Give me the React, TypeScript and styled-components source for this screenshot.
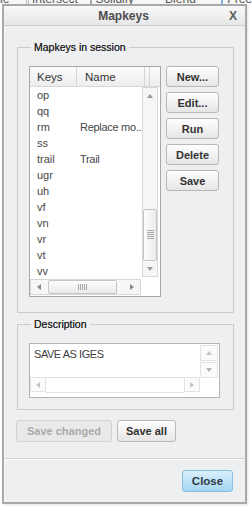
import styled, { createGlobalStyle, css } from 'styled-components'

const GlobalStyle = createGlobalStyle`
  html, body {
    margin: 0;
    padding: 0;
    background: #fff;
  }
  body {
    font-family: 'Liberation Sans', Arial, sans-serif;
    overflow: hidden;
  }
`

const mapkeys = [
  { key: 'op', name: '' },
  { key: 'qq', name: '' },
  { key: 'rm', name: 'Replace mo...' },
  { key: 'ss', name: '' },
  { key: 'trail', name: 'Trail' },
  { key: 'ugr', name: '' },
  { key: 'uh', name: '' },
  { key: 'vf', name: '' },
  { key: 'vn', name: '' },
  { key: 'vr', name: '' },
  { key: 'vt', name: '' },
  { key: 'vv', name: '' },
]

const sideButtons = ['New...', 'Edit...', 'Run', 'Delete', 'Save']

type Dir = 'up' | 'down' | 'left' | 'right'

const Arrow = ({ dir, color }: { dir: Dir; color: string }) => (
  <StyledArrow $dir={dir} $color={color} />
)

export default function App() {
  return (
    <StyledScreen>
      <GlobalStyle />

      <StyledToolbarStrip>
        <StyledToolbarRow>
          <StyledToolLabel $ml={-4}>ne</StyledToolLabel>
          <StyledToolIcon $ml={17} $color="#b9b9b9" />
          <StyledToolLabel $ml={3}>Intersect</StyledToolLabel>
          <StyledToolIcon $ml={12} $color="#a9a9a9" />
          <StyledToolLabel $ml={3}>Solidify</StyledToolLabel>
          <StyledToolLabel $ml={31}>Blend</StyledToolLabel>
          <StyledToolIcon $ml={25} $color="#7fb2de" />
          <StyledToolLabel $ml={4}>Free</StyledToolLabel>
        </StyledToolbarRow>
      </StyledToolbarStrip>

      <StyledDialog>
        <StyledTitleBar>
          <span />
          <StyledTitle>Mapkeys</StyledTitle>
          <StyledCloseX>X</StyledCloseX>
        </StyledTitleBar>

        <StyledBody>
          <StyledGroup $pr={13} $pb={15}>
            <StyledLegend>Mapkeys in session</StyledLegend>
            <StyledSessionRow>
              <StyledListBox>
                <StyledListHeader>
                  <StyledHeaderCell $w={47} $pl={7}>Keys</StyledHeaderCell>
                  <StyledHeaderCell $w={68} $pl={8}>Name</StyledHeaderCell>
                  <StyledHeaderCell $w={5} $pl={0} />
                </StyledListHeader>

                <StyledListBody>
                  <StyledRows>
                    {mapkeys.map((m) => (
                      <StyledRow key={m.key}>
                        <StyledKeyCell>{m.key}</StyledKeyCell>
                        <StyledNameCell>{m.name}</StyledNameCell>
                      </StyledRow>
                    ))}
                  </StyledRows>

                  <StyledVScroll>
                    <StyledScrollButton $size={15}>
                      <Arrow dir="up" color="#9a9a9a" />
                    </StyledScrollButton>
                    <StyledVTrack>
                      <StyledVThumb>
                        <StyledGrip $vertical />
                      </StyledVThumb>
                    </StyledVTrack>
                    <StyledScrollButton $size={14}>
                      <Arrow dir="down" color="#9a9a9a" />
                    </StyledScrollButton>
                  </StyledVScroll>

                  <StyledHScroll $w={111}>
                    <StyledScrollButton $size={16}>
                      <Arrow dir="left" color="#8a8a8a" />
                    </StyledScrollButton>
                    <StyledHTrack>
                      <StyledHThumb>
                        <StyledGrip />
                      </StyledHThumb>
                    </StyledHTrack>
                    <StyledScrollButton $size={16}>
                      <Arrow dir="right" color="#8a8a8a" />
                    </StyledScrollButton>
                  </StyledHScroll>
                </StyledListBody>
              </StyledListBox>

              <StyledButtonColumn>
                {sideButtons.map((b) => (
                  <StyledButton key={b} $w={53} $h={21}>
                    {b}
                  </StyledButton>
                ))}
              </StyledButtonColumn>
            </StyledSessionRow>
          </StyledGroup>

          <StyledGroup $pr={12} $pb={11} $mt={5}>
            <StyledLegend>Description</StyledLegend>
            <StyledDescBox>
              <StyledDescText>SAVE AS IGES</StyledDescText>
              <StyledDescVScroll>
                <StyledDescButton>
                  <Arrow dir="up" color="#c4c4c4" />
                </StyledDescButton>
                <StyledDescButton>
                  <Arrow dir="down" color="#b4b4b4" />
                </StyledDescButton>
              </StyledDescVScroll>
              <StyledDescHScroll>
                <StyledDescButton>
                  <Arrow dir="left" color="#c4c4c4" />
                </StyledDescButton>
                <StyledDescTrack />
                <StyledDescButton>
                  <Arrow dir="right" color="#c4c4c4" />
                </StyledDescButton>
              </StyledDescHScroll>
            </StyledDescBox>
          </StyledGroup>

          <StyledSaveRow>
            <StyledButton $w={96} $h={22} disabled>
              Save changed
            </StyledButton>
            <StyledButton $w={59} $h={22}>
              Save all
            </StyledButton>
          </StyledSaveRow>
        </StyledBody>

        <StyledFooter>
          <StyledButton $w={51} $h={22} $primary>
            Close
          </StyledButton>
        </StyledFooter>
      </StyledDialog>
    </StyledScreen>
  )
}

const StyledScreen = styled.div`
  position: relative;
  width: 252px;
  height: 510px;
  overflow: hidden;
  background: #fff;
`

const StyledToolbarStrip = styled.div`
  height: 4px;
  overflow: hidden;
  background: #f7f7f7;
`

const StyledToolbarRow = styled.div`
  display: flex;
  align-items: center;
  margin-top: -8px;
  height: 14px;
  font-size: 12px;
  line-height: 14px;
  color: #555;
  white-space: nowrap;
`

const StyledToolLabel = styled.span<{ $ml: number }>`
  margin-left: ${({ $ml }) => $ml}px;
`

const StyledToolIcon = styled.span<{ $ml: number; $color: string }>`
  display: block;
  width: 7px;
  height: 12px;
  margin-left: ${({ $ml }) => $ml}px;
  border: 1px solid ${({ $color }) => $color};
  background: #fafafa;
`

const StyledDialog = styled.div`
  position: absolute;
  left: 2px;
  top: 4px;
  width: 245px;
  box-sizing: border-box;
  border: 2px solid #a9a9a9;
  background: #eeeff1;
  box-shadow: inset 1px 1px 0 #fbfbfb, 1px 1px 2px rgba(0, 0, 0, 0.12);
`

const StyledTitleBar = styled.div`
  display: grid;
  grid-template-columns: 1fr auto 1fr;
  align-items: center;
  height: 19px;
  border-bottom: 1px solid #cdcdcd;
  background: linear-gradient(#f7f7f7, #e7e7e8);
`

const StyledTitle = styled.span`
  font-size: 12px;
  font-weight: bold;
  color: #4d4d4d;
  padding-right: 2px;
`

const StyledCloseX = styled.span`
  justify-self: end;
  padding-right: 8px;
  font-size: 12px;
  font-weight: bold;
  color: #5a5a5a;
`

const StyledBody = styled.div`
  padding: 15px 11px 0 13px;
`

const StyledGroup = styled.fieldset<{ $pr: number; $pb: number; $mt?: number }>`
  margin: ${({ $mt }) => $mt ?? 0}px 0 0 0;
  min-width: 0;
  border: 1px solid #cbcbcb;
  padding: 12px ${({ $pr }) => $pr}px ${({ $pb }) => $pb}px 11px;
`

const StyledLegend = styled.legend`
  margin-left: 2px;
  padding: 0 3px;
  font-size: 10.5px;
  line-height: 13px;
  color: #1f1f1f;
  text-shadow: 0 0 0.4px #555;
`

const StyledSessionRow = styled.div`
  display: flex;
  align-items: flex-start;
  gap: 5px;
`

const StyledListBox = styled.div`
  width: 132px;
  height: 231px;
  box-sizing: border-box;
  border: 1px solid #a7a7a7;
  background: #fff;
  display: flex;
  flex-direction: column;
`

const StyledListHeader = styled.div`
  display: flex;
  height: 20px;
  box-sizing: border-box;
  border-bottom: 1px solid #d9d9d9;
  background: linear-gradient(#fbfbfb, #ededed);
`

const StyledHeaderCell = styled.div<{ $w: number; $pl: number }>`
  width: ${({ $w }) => $w}px;
  flex: none;
  box-sizing: border-box;
  padding-left: ${({ $pl }) => $pl}px;
  border-right: 1px solid #d6d6d6;
  font-size: 11.5px;
  line-height: 20px;
  color: #333;
`

const StyledListBody = styled.div`
  display: grid;
  grid-template-columns: 112px 16px;
  grid-template-rows: 192px 17px;
`

const StyledRows = styled.div`
  display: flex;
  flex-direction: column;
  overflow: hidden;
`

const StyledRow = styled.div`
  display: flex;
  align-items: center;
  height: 16px;
  flex: none;
  font-size: 11px;
  color: #474747;
`

const StyledKeyCell = styled.span`
  flex: none;
  width: 50px;
  box-sizing: border-box;
  padding-left: 7px;
`

const StyledNameCell = styled.span`
  white-space: nowrap;
  letter-spacing: -0.3px;
`

const scrollFrame = css`
  box-sizing: border-box;
  border: 1px solid #d8d8d8;
  background: #f6f6f6;
`

const StyledVScroll = styled.div`
  ${scrollFrame};
  display: flex;
  flex-direction: column;
  height: 190px;
`

const StyledScrollButton = styled.div<{ $size: number }>`
  display: flex;
  align-items: center;
  justify-content: center;
  flex: 0 0 ${({ $size }) => $size}px;
`

const StyledVTrack = styled.div`
  flex: 1;
  display: flex;
  flex-direction: column;
  justify-content: flex-end;
  padding-bottom: 1px;
`

const StyledVThumb = styled.div`
  height: 52px;
  box-sizing: border-box;
  border: 1px solid #c6c6c6;
  border-radius: 2px;
  background: linear-gradient(to right, #fdfdfd, #ebebeb);
  display: flex;
  align-items: center;
  justify-content: center;
`

const StyledHScroll = styled.div<{ $w: number }>`
  ${scrollFrame};
  grid-column: 1;
  display: flex;
  width: ${({ $w }) => $w}px;
  height: 16px;
`

const StyledHTrack = styled.div`
  flex: 1;
  display: flex;
  padding-left: 1px;
`

const StyledHThumb = styled.div`
  width: 69px;
  box-sizing: border-box;
  border: 1px solid #c6c6c6;
  border-radius: 2px;
  background: linear-gradient(#fdfdfd, #ebebeb);
  display: flex;
  align-items: center;
  justify-content: center;
`

const StyledGrip = styled.div<{ $vertical?: boolean }>`
  width: ${({ $vertical }) => ($vertical ? '7px' : '10px')};
  height: ${({ $vertical }) => ($vertical ? '10px' : '6px')};
  background: repeating-linear-gradient(
    ${({ $vertical }) => ($vertical ? 'to bottom' : 'to right')},
    #a9a9a9 0 1px,
    transparent 1px 2px
  );
`

const StyledArrow = styled.span<{ $dir: Dir; $color: string }>`
  width: 0;
  height: 0;
  border: 3px solid transparent;
  ${({ $dir, $color }) => {
    switch ($dir) {
      case 'up':
        return css`
          border-bottom: 4px solid ${$color};
          border-top-width: 0;
        `
      case 'down':
        return css`
          border-top: 4px solid ${$color};
          border-bottom-width: 0;
        `
      case 'left':
        return css`
          border-right: 4px solid ${$color};
          border-left-width: 0;
        `
      default:
        return css`
          border-left: 4px solid ${$color};
          border-right-width: 0;
        `
    }
  }}
`

const StyledButtonColumn = styled.div`
  display: flex;
  flex-direction: column;
  gap: 5px;
`

const StyledButton = styled.button<{ $w: number; $h: number; $primary?: boolean }>`
  width: ${({ $w }) => $w}px;
  height: ${({ $h }) => $h}px;
  box-sizing: border-box;
  padding: 0;
  border: 1px solid #b8b8b8;
  border-radius: 3px;
  background: linear-gradient(#fefefe, #e6e6e6);
  font-family: 'Liberation Sans', Arial, sans-serif;
  font-size: 11px;
  font-weight: bold;
  color: #333;

  ${({ $primary }) =>
    $primary &&
    css`
      border-color: #86bcdd;
      background: linear-gradient(#daf0fc, #a3d6f3);
      font-size: 11.5px;
      color: #2f3a42;
    `}

  &:disabled {
    border-color: #d3d3d3;
    background: #e9e9e9;
    color: #a9a9a9;
  }
`

const StyledDescBox = styled.div`
  width: 191px;
  height: 55px;
  box-sizing: border-box;
  border: 1px solid #b4b4b4;
  background: #fff;
  display: grid;
  grid-template-columns: 170px 18px;
  grid-template-rows: 33px 16px;
`

const StyledDescText = styled.div`
  padding: 4px 0 0 4px;
  font-size: 11px;
  line-height: 13px;
  letter-spacing: -0.45px;
  color: #3f3f3f;
`

const StyledDescVScroll = styled.div`
  display: flex;
  flex-direction: column;
  gap: 1px;
  padding-top: 1px;
`

const StyledDescButton = styled.div`
  display: flex;
  align-items: center;
  justify-content: center;
  flex: 0 0 16px;
  height: 15px;
  box-sizing: border-box;
  border: 1px solid #e2e2e2;
  background: #fbfbfb;
`

const StyledDescHScroll = styled.div`
  display: flex;
  height: 16px;
`

const StyledDescTrack = styled.div`
  flex: 1;
  border-top: 1px solid #e2e2e2;
  border-bottom: 1px solid #e2e2e2;
`

const StyledSaveRow = styled.div`
  display: flex;
  gap: 5px;
  margin: 10px 0 0 -1px;
`

const StyledFooter = styled.div`
  display: flex;
  justify-content: flex-end;
  margin-top: 16px;
  padding: 11px 12px 10px;
  border-top: 1px solid #d3d3d3;
  box-shadow: inset 0 1px 0 #fafafa;
`
